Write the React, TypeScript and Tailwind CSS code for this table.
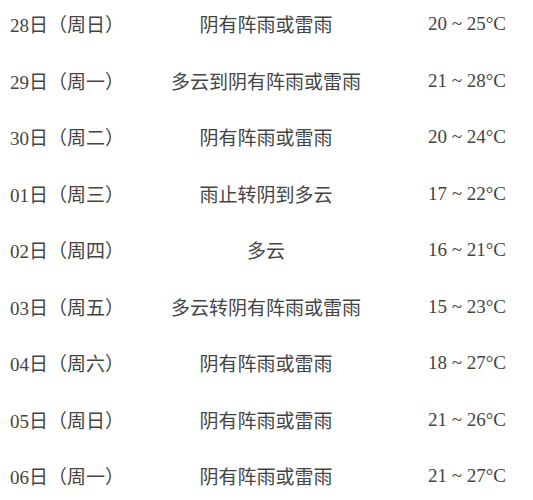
const rows = [
  { day: "28", week: "周日", weather: "阴有阵雨或雷雨", low: "20", high: "25" },
  { day: "29", week: "周一", weather: "多云到阴有阵雨或雷雨", low: "21", high: "28" },
  { day: "30", week: "周二", weather: "阴有阵雨或雷雨", low: "20", high: "24" },
  { day: "01", week: "周三", weather: "雨止转阴到多云", low: "17", high: "22" },
  { day: "02", week: "周四", weather: "多云", low: "16", high: "21" },
  { day: "03", week: "周五", weather: "多云转阴有阵雨或雷雨", low: "15", high: "23" },
  { day: "04", week: "周六", weather: "阴有阵雨或雷雨", low: "18", high: "27" },
  { day: "05", week: "周日", weather: "阴有阵雨或雷雨", low: "21", high: "26" },
  { day: "06", week: "周一", weather: "阴有阵雨或雷雨", low: "21", high: "27" },
];

const serif = "font-['Liberation_Serif','Noto_Sans_CJK_SC',serif]";
const sans = "font-['Noto_Sans_CJK_SC',sans-serif]";

export default function App() {
  return (
    <div className="w-[533px] h-[500px] overflow-hidden bg-white text-[#444] text-[19px] leading-[28px]">
      <div className="flex flex-col gap-[28.5px] pt-[10px]">
        {rows.map((r) => (
          <div key={r.day + r.week} className="flex h-[28px]">
            <div className="w-[166px] pl-[10px] whitespace-nowrap">
              <span className={serif}>{r.day}</span>
              <span className={sans}>日（{r.week}）</span>
            </div>
            <div className={`w-[200px] text-center whitespace-nowrap ${sans}`}>
              {r.weather}
            </div>
            <div className="w-[51px]" />
            <div className={`w-[100px] text-center whitespace-nowrap ${serif}`}>
              {r.low} ~ {r.high}°C
            </div>
          </div>
        ))}
      </div>
    </div>
  );
}
